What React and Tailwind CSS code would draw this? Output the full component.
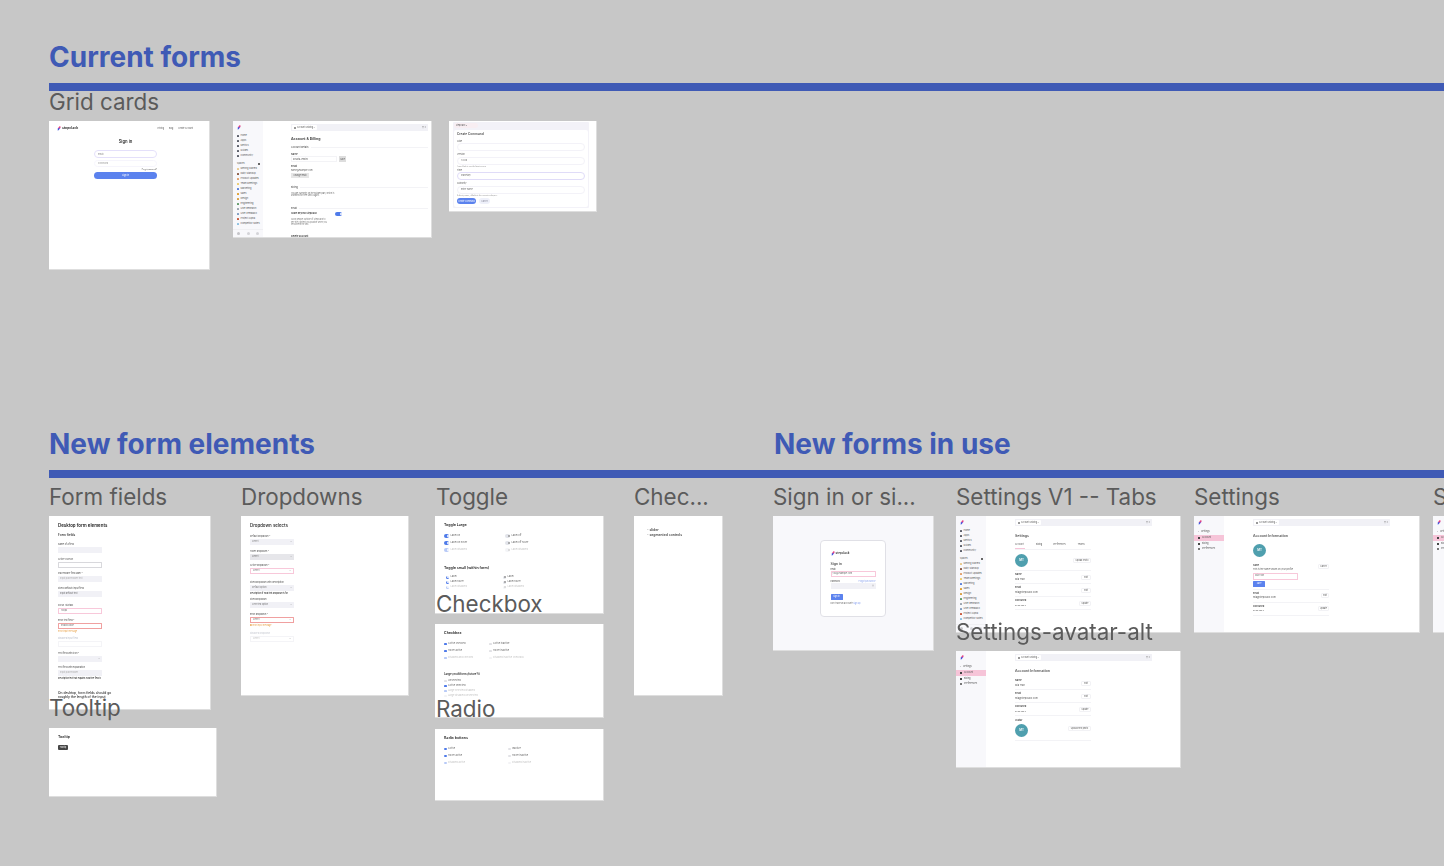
const Logo = ({ className = "" }) => (
  <svg viewBox="0 0 8 12" className={`h-[5px] w-[4px] shrink-0 ${className}`}>
    <path d="M1 6 L5 0.5 L7.5 0.5 L7.5 5 L3 7 Z" fill="#e8437f" />
    <path d="M1 6 L4.5 5 L4.5 9 L1 11.5 Z" fill="#3f5ae0" />
    <path d="M4.5 5 L7.5 4 L4.5 8 Z" fill="#7a3fd0" />
  </svg>
);

const spaces = [
  ["Getting Started", "bg-[#e8c98a]"],
  ["Daily Standup", "bg-[#8a5a44]"],
  ["Product Updates", "bg-[#e2a06a]"],
  ["Team Meetings", "bg-[#eccb6c]"],
  ["Marketing", "bg-[#5a7fd8]"],
  ["Sales", "bg-[#e0a030]"],
  ["Design", "bg-[#d8a040]"],
  ["Engineering", "bg-[#5f9a68]"],
  ["User Research", "bg-[#9aa2ad]"],
  ["User Feedback", "bg-[#7f9cc0]"],
  ["Project Alpha", "bg-[#c9583c]"],
  ["Competitor Notes", "bg-[#8cc0e0]"],
];

const NavRow = ({ label, color = "bg-[#666a75]" }) => (
  <div className="flex h-[5px] items-center gap-[1.5px] pl-[3.5px] text-[2.3px] text-[#555]">
    <span className={`h-[2.5px] w-[2.5px] shrink-0 rounded-[0.5px] ${color}`} />
    <span className="whitespace-nowrap">{label}</span>
  </div>
);

const MainSidebar = () => (
  <aside className="flex h-full w-[30px] shrink-0 flex-col bg-[#f8f8fb] pt-[4px]">
    <Logo className="ml-[4px]" />
    <div className="mt-[3.5px]">
      {["Home", "Apps", "Metrics", "Guides", "Community"].map((n) => (
        <NavRow key={n} label={n} color="bg-[#5a5d67]" />
      ))}
    </div>
    <div className="mt-[3px] flex h-[5px] items-center justify-between pl-[4px] pr-[3px] text-[2.2px] text-[#555]">
      <span>Spaces</span>
      <span className="h-[2px] w-[2px] bg-[#666]" />
    </div>
    <div className="min-h-0 flex-1 overflow-hidden">
      {spaces.map(([n, c]) => (
        <NavRow key={n} label={n} color={c} />
      ))}
    </div>
    <div className="flex h-[8px] shrink-0 items-center justify-between border-t border-[#f0f0f3] bg-[#f8f8fb] px-[4px]">
      <span className="h-[3px] w-[3px] rounded-full bg-[#c4c4c8]" />
      <span className="h-[3px] w-[3px] rounded-full bg-[#d4d4d8]" />
      <span className="h-[3px] w-[3px] rounded-full bg-[#d4d4d8]" />
    </div>
  </aside>
);

const SettingsSidebar = () => (
  <aside className="flex h-full w-[30px] shrink-0 flex-col bg-[#f8f8fb] pt-[4px]">
    <Logo className="ml-[4px]" />
    <div className="mt-[4px] flex h-[6px] items-center gap-[2px] pl-[4px] text-[2.3px] text-[#555]">
      <span>‹</span>
      <span>Settings</span>
    </div>
    <div className="flex h-[6px] items-center gap-[2px] bg-[#f6c4d8] pl-[4px] text-[2.3px] text-[#555]">
      <span className="h-[2px] w-[2px] bg-[#444]" />
      <span>Account</span>
    </div>
    <div className="flex h-[5px] items-center gap-[2px] pl-[4px] text-[2.3px] text-[#555]">
      <span className="h-[2px] w-[2px] bg-[#444]" />
      <span>Billing</span>
    </div>
    <div className="flex h-[5px] items-center gap-[2px] pl-[4px] text-[2.3px] text-[#555]">
      <span className="h-[2px] w-[2px] bg-[#777]" />
      <span>Preferences</span>
    </div>
  </aside>
);

const Topbar = ({ label = "Account & Billing" }) => (
  <div className="flex h-[7px] w-[137px] items-center justify-between rounded-[0.5px] bg-[#f1f1f6] px-[1px] text-[2px] text-[#555]">
    <span className="flex h-[5px] items-center gap-[1px] rounded-[1px] bg-white px-[2px]">
      <span className="h-[2px] w-[2px] rounded-full bg-[#777]" />
      {label} ⌄
    </span>
    <span className="pr-[1px] text-[#888]">⌘ K</span>
  </div>
);

const Mini = ({ children, className = "" }) => (
  <span className={`flex items-center justify-center rounded-[1px] border border-[#f2f2f5] bg-white text-[2px] text-[#555] ${className}`}>
    {children}
  </span>
);

const SettingRow = ({ label, value, action, actionClass = "w-[10px]" }) => (
  <div className="flex h-[13px] w-[76px] items-center justify-between border-b border-[#f3f3f6]">
    <div className="flex flex-col gap-[1.5px] text-[2.4px] leading-[3px]">
      <span className="font-medium text-[#333]">{label}</span>
      <span className="text-[#555]">{value}</span>
    </div>
    <Mini className={`h-[5px] ${actionClass}`}>{action}</Mini>
  </div>
);

const Avatar = () => (
  <span className="flex h-[13px] w-[13px] items-center justify-center rounded-full bg-[#4f9fae] text-[3px] font-semibold text-white">
    MT
  </span>
);

// previews are pasted-in screenshots, so their content is slightly soft
const Frame = ({ className, inner = "", children }) => (
  <div className={`absolute overflow-hidden border-b border-r border-[#dedede] bg-white ${className}`}>
    <div className={`h-full w-full blur-[0.3px] ${inner}`}>{children}</div>
  </div>
);

const FieldLabel = ({ children, className = "" }) => (
  <div className={`text-[2.2px] leading-[4px] ${className || "text-[#444]"}`}>{children}</div>
);

const Input = ({ children, className = "bg-[#f1f1f6] text-[#777]", chevron }) => (
  <div className={`flex h-[6px] w-[44px] items-center justify-between rounded-[0.5px] px-[2px] text-[2.2px] ${className}`}>
    <span>{children}</span>
    {chevron && <span className="text-[#888]">⌄</span>}
  </div>
);

const Hint = ({ children, className = "text-[#777]" }) => (
  <div className={`whitespace-nowrap text-[2px] leading-[3px] ${className}`}>{children}</div>
);

const Toggle = ({ on, small, className = "" }) => (
  <span
    className={`flex shrink-0 items-center rounded-full p-[0.5px] ${small ? "h-[3px] w-[3px]" : "h-[3.5px] w-[5px]"} ${
      on ? "justify-end bg-[#4f7bea]" : "justify-end bg-[#e2e4ea]"
    } ${className}`}
  >
    <span className={`h-[2px] w-[2px] rounded-full ${on ? "bg-white" : "bg-[#999]"}`} />
  </span>
);

const Option = ({ control, children, faded }) => (
  <div className={`flex h-[3px] items-center gap-[1.5px] text-[2.4px] text-[#666] ${faded ? "opacity-40" : ""}`}>
    {control}
    <span className="whitespace-nowrap">{children}</span>
  </div>
);

const Box = ({ on, round }) => (
  <span
    className={`h-[2.5px] w-[2.5px] shrink-0 ${round ? "rounded-full" : "rounded-[0.4px]"} ${
      on ? "bg-[#4f7bea]" : "bg-[#e2e2e6]"
    }`}
  />
);

const Heading = ({ children, className }) => (
  <h2 className={`absolute whitespace-nowrap text-[28px] font-bold leading-[36px] text-[#3f5ab5] ${className}`}>{children}</h2>
);

const Bar = ({ className }) => <div className={`absolute left-[49px] h-[8px] w-[1395px] bg-[#3f5ab5] ${className}`} />;

const Label = ({ children, className }) => (
  <div className={`absolute z-10 whitespace-nowrap text-[22.4px] leading-[28px] text-[#5b5b5b] ${className}`}>{children}</div>
);

const SignInFrame = () => (
  <Frame className="left-[49px] top-[121px] h-[149px] w-[161px]">
    <div className="flex items-center justify-between pl-[8px] pr-[16px] pt-[5px]">
      <div className="flex items-center gap-[1px] text-[3.4px] font-bold text-[#333]">
        <Logo />
        stepclack
      </div>
      <div className="flex gap-[5px] text-[2px] text-[#555]">
        <span>Pricing</span>
        <span>Blog</span>
        <span>Create Account</span>
      </div>
    </div>
    <div className="ml-[45px] mt-[8px] w-[63px] text-center text-[4.2px] font-semibold text-[#333]">Sign in</div>
    <div className="ml-[45px] mt-[5px] flex w-[63px] flex-col">
      <div className="flex h-[8px] items-center rounded-full border border-[#e4e0fa] px-[3px] text-[2.2px] text-[#888]">Email</div>
      <div className="mt-[2px] flex h-[7px] items-center rounded-full border border-[#f6f5fc] px-[3px] text-[2.2px] text-[#999]">Password</div>
      <div className="mt-[1px] text-right text-[1.8px] leading-[3px] text-[#555]">Forgot password?</div>
      <div className="mt-[0.5px] flex h-[7px] items-center justify-center rounded-full bg-[#5b82ee] text-[2.2px] text-white">Sign in</div>
    </div>
  </Frame>
);

const SectionHead = ({ children }) => (
  <div className="flex items-center gap-[2px] text-[2.4px] leading-[3px] text-[#444]">
    <span className="whitespace-nowrap">{children}</span>
    <span className="h-px flex-1 bg-[#f3f3f6]" />
  </div>
);

const AccountFrame = () => (
  <Frame className="left-[233px] top-[121px] h-[117px] w-[199px]" inner="flex">
    <MainSidebar />
    <main className="flex-1 pl-[28px] pr-[4px] pt-[3px]">
      <Topbar />
      <div className="mt-[5.5px] text-[3.6px] font-semibold leading-[5px] text-[#333]">Account &amp; Billing</div>
      <div className="mt-[4px]"><SectionHead>Account details</SectionHead></div>
      <div className="mt-[4px] text-[2.4px] font-medium leading-[3px] text-[#333]">Name</div>
      <div className="mt-[0.5px] flex gap-[2px]">
        <div className="flex h-[6px] w-[46px] items-center border border-[#f3f3f6] px-[1px] text-[2px] text-[#555]">Rosaria Jenkins</div>
        <span className="flex h-[6px] w-[7px] items-center justify-center bg-[#ddd] text-[2px] text-[#555]">Save</span>
      </div>
      <div className="mt-[2.5px] text-[2.4px] font-medium leading-[3px] text-[#333]">Email</div>
      <div className="mt-[1px] text-[2.2px] leading-[3px] text-[#555]">name@example.com</div>
      <div className="mt-[1.5px] flex h-[5px] w-[18px] items-center justify-center bg-[#e6e6e6] text-[2px] text-[#555]">Change email</div>
      <div className="mt-[7.5px]"><SectionHead>Billing</SectionHead></div>
      <div className="mt-[3.3px] w-[50px] text-[2px] leading-[2.4px] text-[#666]">You are currently on the Builder plan, which is unlimited for free until August.</div>
      <div className="mt-[10px]"><SectionHead>Email</SectionHead></div>
      <div className="mt-[2.5px] flex w-[51px] items-center justify-between">
        <span className="text-[2.2px] font-semibold text-[#333]">Share Beyond Stepclack</span>
        <Toggle on className="!h-[4px] !w-[7px]" />
      </div>
      <div className="mt-[2px] w-[37px] text-[2px] leading-[2.6px] text-[#777]">Allow people outside of Stepclack to see the content you publish when you send them the link.</div>
      <div className="mt-[9.5px] text-[2.4px] font-semibold leading-[3px] text-[#333]">Delete account</div>
    </main>
  </Frame>
);

const CreateField = ({ label, children, hint, className = "mt-[2px]", labelGap = "mt-[0.5px]", border = "border-[#f3f2f8]", height = "h-[7.5px]" }) => (
  <div className={className}>
    <div className="text-[2.2px] leading-[3px] text-[#555]">{label}</div>
    <div className={`${labelGap} flex ${height} w-[128px] items-center rounded-full border px-[3px] text-[2.2px] text-[#666] ${border}`}>{children}</div>
    {hint && <div className="text-[1.7px] leading-[2.5px] text-[#888]">{hint}</div>}
  </div>
);

const CreateFrame = () => (
  <Frame className="left-[449px] top-[121px] h-[91px] w-[148px]">
    <div className="ml-[4px] mt-[1px] h-[86px] w-[136px] rounded-[1px] bg-[#f3f2f8] p-[1px]">
      <div className="flex h-[5px] w-[24px] items-center rounded-full bg-[#f8eef2] px-[2px] text-[2px] text-[#555]">Stepclack ×</div>
      <div className="mt-[2px] flex h-[77px] flex-col rounded-[2px] bg-white px-[3px] pt-[2px]">
        <div className="text-[3.2px] font-medium leading-[4px] text-[#333]">Create Command</div>
        <CreateField label="Slide" className="mt-[3.5px]"> </CreateField>
        <CreateField label="Version" labelGap="mt-[1.5px]" hint="Leave blank to use the latest version">1.0.0b</CreateField>
        <CreateField label="Time" className="mt-[1.5px]" border="border-[#e0dcf8]">Planetary</CreateField>
        <CreateField label="Authority" labelGap="mt-[1.5px]" hint="Authority name, defaults to the current workspace">Enter name</CreateField>
        <div className="mt-[2px] flex gap-[3px]">
          <span className="flex h-[6px] w-[19px] items-center justify-center rounded-full bg-[#5b82ee] text-[2px] text-white">Create Command</span>
          <span className="flex h-[6px] w-[11px] items-center justify-center rounded-full bg-[#eef0fa] text-[2px] text-[#889]">Cancel</span>
        </div>
      </div>
    </div>
  </Frame>
);

const FormFieldsFrame = () => (
  <Frame className="left-[49px] top-[516px] h-[194px] w-[162px]" inner="pl-[9px] pt-[7px]">
    <div className="text-[4.4px] font-semibold leading-[5px] text-[#222]">Desktop form elements</div>
    <div className="mt-[5px] text-[3.2px] font-semibold leading-[4px] text-[#333]">Form fields</div>
    <div className="mt-[6px] flex flex-col">
      <FieldLabel>Name of a field</FieldLabel>
      <Input> </Input>
      <FieldLabel className="mt-[5px] text-[#444]">Active (cursor)</FieldLabel>
      <Input className="border border-[#d8d8dc] bg-white"> </Input>
      <FieldLabel className="mt-[4px] text-[#444]">Placeholder field label *</FieldLabel>
      <Input className="bg-[#f1f1f6] text-[#aaa]">Input placeholder text</Input>
      <FieldLabel className="mt-[5px] text-[#444]">Filled (default) input field</FieldLabel>
      <Input className="bg-[#f1f1f6] text-[#666]">Input default text</Input>
      <FieldLabel className="mt-[7px] text-[#444]">Focus (via tab)</FieldLabel>
      <Input className="border border-[#f8c8da] bg-white text-[#666]">100px</Input>
      <FieldLabel className="mt-[5px] text-[#444]">Error text field *</FieldLabel>
      <Input className="border border-[#f0a0a0] bg-white text-[#666]">Invalid value</Input>
      <Hint className="mt-[0.5px] text-[#e8a24a]">Error input message</Hint>
      <FieldLabel className="mt-[4.5px] text-[#b7bcc8]">Disabled input field</FieldLabel>
      <Input className="border border-[#f4f4f7] bg-white"> </Input>
      <FieldLabel className="mt-[5px] text-[#444]">Text field with icon *</FieldLabel>
      <Input chevron> </Input>
      <FieldLabel className="mt-[4px] text-[#444]">Text field with explanation</FieldLabel>
      <Input className="bg-[#f1f1f6] text-[#aaa]">Input placeholder</Input>
      <Hint className="mt-[0.5px]">Description text that explains what the field is</Hint>
    </div>
    <p className="mt-[11.5px] w-[60px] text-[3.3px] font-medium leading-[4.3px] text-[#222]">On desktop, form fields should go roughly the length of the input</p>
  </Frame>
);

const DropdownFrame = () => (
  <Frame className="left-[241px] top-[516px] h-[180px] w-[168px]" inner="pl-[9px] pt-[7px]">
    <div className="text-[4.4px] font-medium leading-[5px] text-[#222]">Dropdown selects</div>
    <div className="mt-[7px] flex flex-col">
      <FieldLabel>Default dropdown *</FieldLabel>
      <Input chevron>Select</Input>
      <FieldLabel className="mt-[5px] text-[#444]">Hover dropdown *</FieldLabel>
      <Input chevron className="bg-[#e6e6ea] text-[#666]">Select</Input>
      <FieldLabel className="mt-[4px] text-[#444]">Active dropdown *</FieldLabel>
      <Input chevron className="border border-[#f8c8da] bg-white text-[#666]">Select</Input>
      <FieldLabel className="mt-[7px] text-[#444]">Filled dropdown with description</FieldLabel>
      <Input chevron>Default option</Input>
      <Hint className="mt-[0.5px]">Description of what this dropdown is for</Hint>
      <FieldLabel className="mt-[3.5px] text-[#444]">Filled dropdown</FieldLabel>
      <Input chevron>Selected option</Input>
      <FieldLabel className="mt-[5px] text-[#444]">Error dropdown *</FieldLabel>
      <Input chevron className="border border-[#f0a0a0] bg-white text-[#666]">Select</Input>
      <Hint className="mt-[0.5px] text-[#e8a24a]">● Error input message</Hint>
      <FieldLabel className="mt-[5.5px] text-[#c5c8d0]">Disabled dropdown</FieldLabel>
      <Input chevron className="border border-[#f4f4f7] bg-white text-[#bbb]">Select</Input>
    </div>
  </Frame>
);

const ToggleFrame = () => (
  <Frame className="left-[435px] top-[516px] h-[98px] w-[169px]" inner="pl-[9px] pt-[7px]">
    <div className="text-[3.6px] font-semibold leading-[4px] text-[#222]">Toggle Large</div>
    <div className="mt-[7.5px] flex">
      <div className="flex w-[61px] flex-col gap-[4px]">
        <Option control={<Toggle on />}>Label on</Option>
        <Option control={<Toggle on />}>Label on hover</Option>
        <Option faded control={<Toggle on />}>Label disabled</Option>
      </div>
      <div className="flex flex-col gap-[4px]">
        <Option control={<Toggle />}>Label off</Option>
        <Option control={<Toggle />}>Label off hover</Option>
        <Option faded control={<Toggle />}>Label disabled</Option>
      </div>
    </div>
    <div className="mt-[14.5px] text-[3.6px] font-semibold leading-[4px] text-[#222]">Toggle small (within form)</div>
    <div className="mt-[5.5px] flex pl-[2px]">
      <div className="flex w-[57px] flex-col gap-[2px]">
        <Option control={<Toggle on small />}>Label</Option>
        <Option control={<Toggle on small />}>Label hover</Option>
        <Option faded control={<Toggle on small />}>Label disabled</Option>
      </div>
      <div className="flex flex-col gap-[2px]">
        <Option control={<Toggle small />}>Label</Option>
        <Option control={<Toggle small />}>Label hover</Option>
        <Option faded control={<Toggle small />}>Label disabled</Option>
      </div>
    </div>
  </Frame>
);

const CheckboxFrame = () => (
  <Frame className="left-[435px] top-[624px] h-[94px] w-[169px]" inner="pl-[9px] pt-[7px]">
    <div className="text-[3.6px] font-semibold leading-[4px] text-[#222]">Checkbox</div>
    <div className="mt-[7.5px] flex">
      <div className="flex w-[45px] flex-col gap-[4px]">
        <Option control={<Box on />}>Active checked</Option>
        <Option control={<Box on />}>Hover active</Option>
        <Option faded control={<Box on />}>Disabled and checked</Option>
      </div>
      <div className="flex flex-col gap-[4px]">
        <Option control={<Box />}>Active inactive</Option>
        <Option control={<Box />}>Hover inactive</Option>
        <Option faded control={<Box />}>Disabled inactive checkbox</Option>
      </div>
    </div>
    <div className="mt-[12.5px] text-[2.8px] font-semibold leading-[4px] text-[#222]">Large (multiform (future?))</div>
    <div className="mt-[3.5px] flex flex-col gap-[2px]">
      <Option control={<Box />}>Unselected</Option>
      <Option control={<Box on />}>Active selected</Option>
      <Option faded control={<Box on />}>Large selected disabled</Option>
      <Option faded control={<Box />}>Large disabled unselected</Option>
    </div>
  </Frame>
);

const RadioFrame = () => (
  <Frame className="left-[435px] top-[729px] h-[72px] w-[169px]" inner="pl-[9px] pt-[7px]">
    <div className="text-[3.6px] font-semibold leading-[4px] text-[#222]">Radio buttons</div>
    <div className="mt-[7.5px] flex">
      <div className="flex w-[64px] flex-col gap-[4px]">
        <Option control={<Box on round />}>Active</Option>
        <Option control={<Box on round />}>Hover active</Option>
        <Option faded control={<Box on round />}>Disabled active</Option>
      </div>
      <div className="flex flex-col gap-[4px]">
        <Option control={<Box round />}>Inactive</Option>
        <Option control={<Box round />}>Hover inactive</Option>
        <Option faded control={<Box round />}>Disabled inactive</Option>
      </div>
    </div>
  </Frame>
);

const SignInCardFrame = () => (
  <div className="absolute left-[773px] top-[516px] flex h-[135px] w-[161px] items-start justify-center border-b border-r border-[#dedede] bg-[#f8f8fb] pt-[24px]">
    <div className="h-[77px] w-[66px] rounded-[4px] border-[1.5px] border-[#e0e0e6] bg-white px-[9.5px] pt-[10px] blur-[0.3px]">
      <div className="flex items-center gap-[1px] text-[3px] font-semibold leading-[5px] text-[#333]">
        <Logo />
        stepclack
      </div>
      <div className="mt-[6px] text-[3.6px] font-medium leading-[4px] text-[#333]">Sign in</div>
      <div className="mt-[1.5px] text-[2px] leading-[3px] text-[#444]">Email</div>
      <div className="flex h-[6px] w-[45px] items-center rounded-[0.5px] border border-[#f8c8da] px-[1px] text-[2.2px] text-[#666]">you@example.com</div>
      <div className="mt-[3.5px] flex w-[45px] justify-between text-[2px] leading-[3px]">
        <span className="text-[#444]">Password</span>
        <span className="text-[#8ea6ee]">Forgot password?</span>
      </div>
      <div className="flex h-[6px] w-[45px] items-center justify-end rounded-[0.5px] bg-[#f1f1f6] px-[2px] text-[2.2px] text-[#888]">◎</div>
      <div className="mt-[5px] flex h-[5.5px] w-[12px] items-center justify-center rounded-[0.5px] bg-[#5b82ee] text-[2px] text-white">Sign in</div>
      <div className="mt-[2.5px] whitespace-nowrap text-[2px] leading-[3px] text-[#666]">
        Don't have an account? <span className="text-[#7f9aee]">Sign up</span>
      </div>
    </div>
  </div>
);

const SettingsV1Frame = () => (
  <Frame className="left-[956px] top-[516px] h-[117px] w-[225px]" inner="flex">
    <MainSidebar />
    <main className="pl-[29px] pt-[3px]">
      <Topbar />
      <div className="mt-[8px] text-[3.6px] font-medium leading-[5px] text-[#333]">Settings</div>
      <div className="mt-[3px] flex w-[76px] border-b border-[#f3f3f6] text-[2.2px] leading-[6px] text-[#555]">
        <span className="w-[10px] border-b border-[#f6c4d8]">Account</span>
        <span className="ml-[11px]">Billing</span>
        <span className="ml-[11px]">Preferences</span>
        <span className="ml-[12px]">Teams</span>
      </div>
      <div className="flex h-[21px] w-[76px] items-center justify-between border-b border-[#f3f3f6]">
        <Avatar />
        <Mini className="h-[5px] w-[18px]">Upload Photo</Mini>
      </div>
      <SettingRow label="Name" value="Mia Tran" action="Edit" />
      <SettingRow label="Email" value="mia@stepclack.com" action="Edit" />
      <SettingRow label="Password" value="••••••••" action="Update" actionClass="w-[12px]" />
    </main>
  </Frame>
);

const AvatarAltFrame = () => (
  <Frame className="left-[956px] top-[651px] h-[117px] w-[225px]" inner="flex">
    <SettingsSidebar />
    <main className="pl-[29px] pt-[3px]">
      <Topbar />
      <div className="mt-[7.5px] text-[3.6px] font-medium leading-[5px] text-[#333]">Account Information</div>
      <div className="mt-[3.5px] flex flex-col">
        <SettingRow label="Name" value="Mia Tran" action="Edit" />
        <SettingRow label="Email" value="mia@stepclack.com" action="Edit" />
        <SettingRow label="Password" value="••••••••" action="Update" actionClass="w-[12px]" />
        <div className="w-[76px] border-b border-[#f3f3f6] py-[3px]">
          <div className="text-[2.4px] font-medium leading-[3px] text-[#333]">Avatar</div>
          <div className="mt-[1.5px] flex items-center justify-between">
            <Avatar />
            <Mini className="mb-[3px] h-[5px] w-[23px]">Upload new photo</Mini>
          </div>
        </div>
      </div>
    </main>
  </Frame>
);

const SettingsFrame = () => (
  <Frame className="left-[1194px] top-[516px] h-[117px] w-[226px]" inner="flex">
    <SettingsSidebar />
    <main className="pl-[29px] pt-[3px]">
      <Topbar />
      <div className="mt-[8px] text-[3.6px] font-medium leading-[5px] text-[#333]">Account Information</div>
      <div className="mt-[5px]"><Avatar /></div>
      <div className="mt-[6.5px] w-[76px] border-b border-[#f3f3f6] pb-[2px]">
        <div className="flex items-start justify-between">
          <div className="flex flex-col gap-[1.5px] text-[2.2px] leading-[3px]">
            <span className="font-medium text-[#333]">Name</span>
            <span className="whitespace-nowrap text-[#555]">This is the name shown on your profile</span>
          </div>
          <Mini className="h-[5px] w-[11px] shrink-0">Cancel</Mini>
        </div>
        <div className="mt-[1.5px] flex h-[7px] w-[45px] items-center rounded-[0.5px] border border-[#f8c8da] px-[1px] text-[2.2px] text-[#666]">Mia Tran</div>
        <div className="mt-[1px] flex h-[6px] w-[12px] items-center justify-center rounded-[0.5px] bg-[#5b82ee] text-[2px] text-white">Save</div>
      </div>
      <SettingRow label="Email" value="mia@stepclack.com" action="Edit" actionClass="w-[8px]" />
      <SettingRow label="Password" value="••••••••" action="Update" actionClass="w-[11px]" />
    </main>
  </Frame>
);

const TooltipFrame = () => (
  <Frame className="left-[49px] top-[728px] h-[69px] w-[168px]" inner="pl-[9px] pt-[7px]">
    <div className="text-[3.6px] font-semibold leading-[4px] text-[#222]">Tooltip</div>
    <div className="mt-[6px] flex h-[5px] w-[10px] items-center justify-center rounded-[1px] bg-[#444] text-[2px] text-white">Tooltip</div>
  </Frame>
);

const NotesFrame = () => (
  <Frame className="left-[634px] top-[516px] h-[180px] w-[89px]" inner="pl-[13px] pt-[12px]">
    <ul className="text-[3.4px] font-semibold leading-[5px] text-[#444]">
      <li>- slider</li>
      <li>- segmented controls</li>
    </ul>
  </Frame>
);

const ClippedFrame = () => (
  <Frame className="left-[1433px] top-[516px] h-[117px] w-[225px]" inner="flex">
    <SettingsSidebar />
  </Frame>
);

export default function App() {
  return (
    <div className="relative h-[866px] w-[1444px] overflow-hidden bg-[#c7c7c7] font-['Inter',sans-serif]">
      <Heading className="left-[49px] top-[39px]">Current forms</Heading>
      <Bar className="top-[83px]" />
      <Label className="left-[49px] top-[88px]">Grid cards</Label>
      <SignInFrame />
      <AccountFrame />
      <CreateFrame />

      <Heading className="left-[49px] top-[426px]">New form elements</Heading>
      <Heading className="left-[774px] top-[426px]">New forms in use</Heading>
      <Bar className="top-[470px]" />

      <Label className="left-[49px] top-[483px]">Form fields</Label>
      <Label className="left-[241px] top-[483px]">Dropdowns</Label>
      <Label className="left-[436px] top-[483px]">Toggle</Label>
      <Label className="left-[634px] top-[483px]">Chec...</Label>
      <Label className="left-[773px] top-[483px]">Sign in or si...</Label>
      <Label className="left-[956px] top-[483px]">Settings V1 -- Tabs</Label>
      <Label className="left-[1194px] top-[483px]">Settings</Label>
      <Label className="left-[1433px] top-[483px]">Settings</Label>
      <Label className="left-[49px] top-[694px]">Tooltip</Label>
      <Label className="left-[436px] top-[590px]">Checkbox</Label>
      <Label className="left-[436px] top-[695px]">Radio</Label>
      <Label className="left-[956px] top-[618px]">Settings-avatar-alt</Label>

      <FormFieldsFrame />
      <DropdownFrame />
      <ToggleFrame />
      <CheckboxFrame />
      <RadioFrame />
      <NotesFrame />
      <TooltipFrame />
      <SignInCardFrame />
      <SettingsV1Frame />
      <AvatarAltFrame />
      <SettingsFrame />
      <ClippedFrame />
    </div>
  );
}
